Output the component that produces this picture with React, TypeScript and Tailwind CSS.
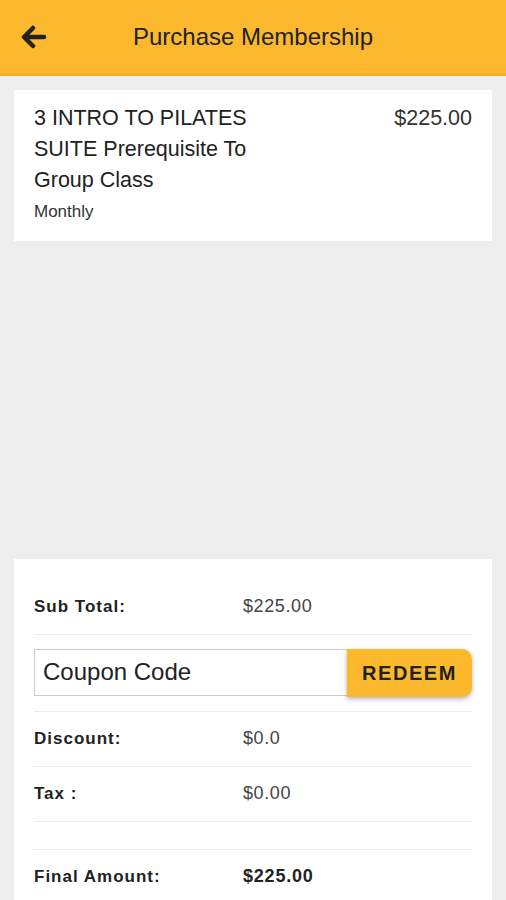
import React from "react";

function BackArrow() {
  return (
    <svg width="26" height="24" viewBox="0 0 26 24" fill="none">
      <path
        d="M12 3 L3 12 L12 21 M4 12 H23"
        stroke="#222"
        strokeWidth="4.5"
        strokeLinecap="round"
        strokeLinejoin="round"
      />
    </svg>
  );
}

function Row({ label, value, bold }: { label: string; value: string; bold?: boolean }) {
  return (
    <div className="flex h-[55px] items-center border-b border-[#ececec]">
      <span className="w-[209px] text-[17px] font-bold tracking-[1px] text-[#222]">{label}</span>
      <span
        className={
          bold
            ? "text-[18px] font-bold tracking-[0.8px] text-[#222]"
            : "text-[18px] tracking-[0.6px] text-[#444]"
        }
      >
        {value}
      </span>
    </div>
  );
}

export default function App() {
  return (
    <div className="min-h-[900px] bg-[#eeeeee] font-['Liberation_Sans',Arial,sans-serif]">
      <header className="relative flex h-[76px] items-center justify-center border-b-2 border-[#f4ad22] bg-[#fdb92e]">
        <button className="absolute left-[21px] top-[25px]">
          <BackArrow />
        </button>
        <h1 className="text-[24px] text-[#222]">Purchase Membership</h1>
      </header>

      <div className="px-[14px] pt-[14px]">
        <div className="flex justify-between bg-white px-5 pb-[16px] pt-[13px]">
          <div className="w-[250px]">
            <p className="text-[21.5px] leading-[31px] text-[#222]">
              3 INTRO TO PILATES SUITE Prerequisite To Group Class
            </p>
            <p className="mt-[3px] text-[17px] text-[#333]">Monthly</p>
          </div>
          <p className="text-[21.5px] leading-[31px] text-[#333]">$225.00</p>
        </div>

        <div className="mt-[318px] bg-white px-5 pt-[21px]">
          <Row label="Sub Total:" value="$225.00" />
          <div className="flex border-b border-[#ececec] py-[14px]">
            <input
              className="h-[47px] min-w-0 flex-1 border border-r-0 border-[#cccccc] px-[8px] text-[24px] text-[#222] placeholder:text-[#222] outline-none"
              placeholder="Coupon Code"
            />
            <button className="h-[48px] w-[125px] rounded-r-[10px] bg-[#fdb92e] text-[20px] font-bold tracking-[1.6px] text-[#222] shadow-[0_2px_5px_rgba(0,0,0,0.3)]">
              REDEEM
            </button>
          </div>
          <Row label="Discount:" value="$0.0" />
          <Row label="Tax :" value="$0.00" />
          <div className="h-[28px] border-b border-[#ececec]" />
          <Row label="Final Amount:" value="$225.00" bold />
        </div>
      </div>
    </div>
  );
}
